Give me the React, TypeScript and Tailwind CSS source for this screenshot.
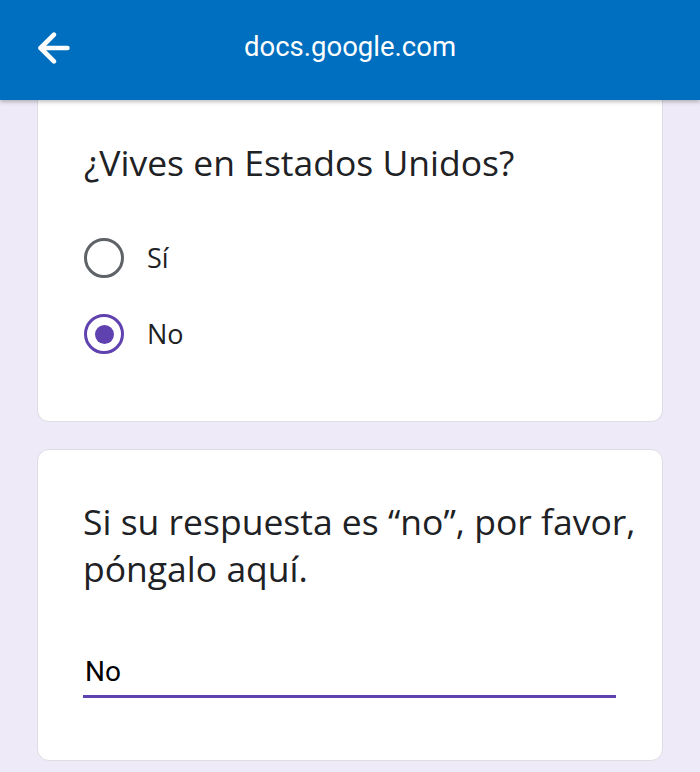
import { ArrowLeft } from "lucide-react";

const Radio = ({ checked }: { checked?: boolean }) =>
  checked ? (
    <div className="w-[40px] h-[40px] rounded-full border-[3.5px] border-[#6041b0] flex items-center justify-center">
      <div className="w-[19px] h-[19px] rounded-full bg-[#6041b0]" />
    </div>
  ) : (
    <div className="w-[40px] h-[40px] rounded-full border-[3.5px] border-[#5f6368]" />
  );

export default function App() {
  return (
    <div className="w-[700px] h-[772px] overflow-hidden bg-[#eeeaf7] flex flex-col">
      {/* barra superior */}
      <header className="relative z-10 h-[100px] shrink-0 bg-[#006fbf] shadow-[0_2px_4px_rgba(0,0,0,0.25)] flex items-center">
        <ArrowLeft className="absolute left-[31px] top-[25px] w-[46px] h-[46px] text-white" strokeWidth={2.4} />
        <div className="w-full text-center text-white text-[27.5px] font-['Roboto',sans-serif] -mt-[6px]">
          docs.google.com
        </div>
      </header>

      <main className="flex flex-col gap-[27px] px-[37px]">
        {/* pregunta 1 */}
        <section className="bg-white rounded-b-[12px] border border-t-0 border-[#dedde3] pt-[40px] pb-[49px] pl-[46px] font-['Open_Sans',sans-serif] text-[#202124]">
          <h2 className="text-[35.5px] leading-[44px]">¿Vives en Estados Unidos?</h2>
          <div className="mt-[36px] flex flex-col">
            <label className="h-[76px] flex items-center gap-[23px]">
              <Radio />
              <span className="text-[27px]">Sí</span>
            </label>
            <label className="h-[76px] flex items-center gap-[23px]">
              <Radio checked />
              <span className="text-[27px]">No</span>
            </label>
          </div>
        </section>

        {/* pregunta 2 */}
        <section className="bg-white rounded-[12px] border border-[#dedde3] pt-[48px] pb-[62px] pl-[45px] pr-[16px] font-['Open_Sans',sans-serif] text-[#202124]">
          <h2 className="text-[35.5px] leading-[47px]">
            Si su respuesta es “no”, por favor, póngalo aquí.
          </h2>
          <div className="mt-[64px] w-[533px]">
            <div className="text-[28px] leading-[32px] font-['Roboto',sans-serif] text-black pl-[2px]">No</div>
            <div className="mt-[7px] h-[3px] bg-[#6041b0]" />
          </div>
        </section>
      </main>
    </div>
  );
}
